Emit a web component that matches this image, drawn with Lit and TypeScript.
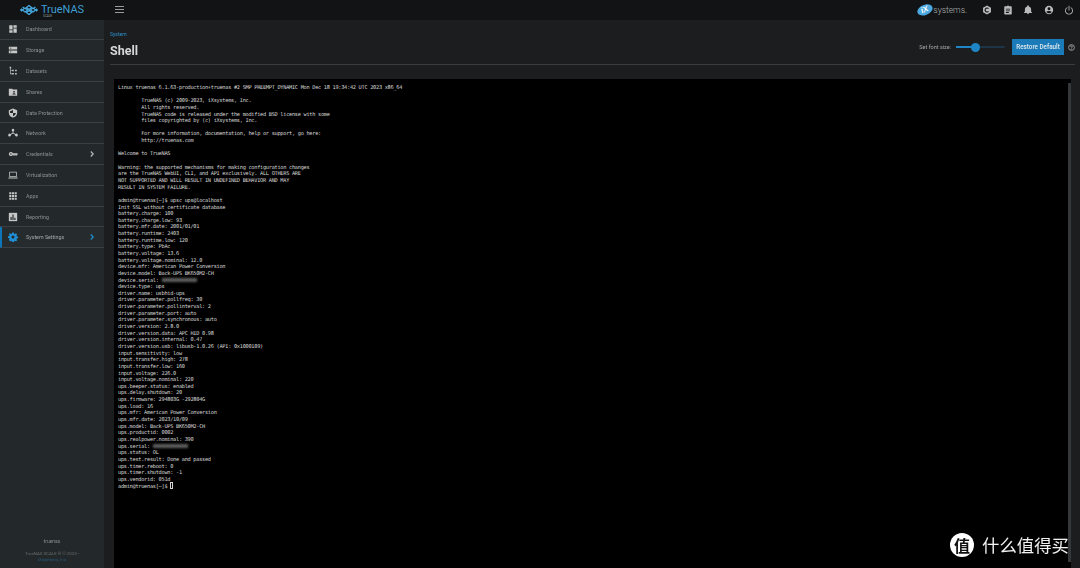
import { LitElement, html, css, svg } from "lit";
import { customElement } from "lit/decorators.js";

const LINES = `Linux truenas 6.1.63-production+truenas #2 SMP PREEMPT_DYNAMIC Mon Dec 18 19:34:42 UTC 2023 x86_64

        TrueNAS (c) 2009-2023, iXsystems, Inc.
        All rights reserved.
        TrueNAS code is released under the modified BSD license with some
        files copyrighted by (c) iXsystems, Inc.

        For more information, documentation, help or support, go here:
        http://truenas.com

Welcome to TrueNAS

Warning: the supported mechanisms for making configuration changes
are the TrueNAS WebUI, CLI, and API exclusively. ALL OTHERS ARE
NOT SUPPORTED AND WILL RESULT IN UNDEFINED BEHAVIOR AND MAY
RESULT IN SYSTEM FAILURE.

admin@truenas[~]$ upsc ups@localhost
Init SSL without certificate database
battery.charge: 100
battery.charge.low: 93
battery.mfr.date: 2001/01/01
battery.runtime: 2403
battery.runtime.low: 120
battery.type: PbAc
battery.voltage: 13.6
battery.voltage.nominal: 12.0
device.mfr: American Power Conversion
device.model: Back-UPS BK650M2-CH
device.serial: @@
device.type: ups
driver.name: usbhid-ups
driver.parameter.pollfreq: 30
driver.parameter.pollinterval: 2
driver.parameter.port: auto
driver.parameter.synchronous: auto
driver.version: 2.8.0
driver.version.data: APC HID 0.98
driver.version.internal: 0.47
driver.version.usb: libusb-1.0.26 (API: 0x1000109)
input.sensitivity: low
input.transfer.high: 278
input.transfer.low: 160
input.voltage: 226.0
input.voltage.nominal: 220
ups.beeper.status: enabled
ups.delay.shutdown: 20
ups.firmware: 294803G -292804G
ups.load: 16
ups.mfr: American Power Conversion
ups.mfr.date: 2023/10/09
ups.model: Back-UPS BK650M2-CH
ups.productid: 0002
ups.realpower.nominal: 390
ups.serial: @@
ups.status: OL
ups.test.result: Done and passed
ups.timer.reboot: 0
ups.timer.shutdown: -1
ups.vendorid: 051d
admin@truenas[~]$ #`.split("\n");

const NAV: { label: string; icon: any; arrow?: boolean; active?: boolean }[] = [
  { label: "Dashboard", icon: svg`<path d="M3 3h8v10H3zM13 3h8v6h-8zM13 11h8v10h-8zM3 15h8v6H3z"/>` },
  { label: "Storage", icon: svg`<path d="M2 4h20v7H2zM2 13h20v7H2z"/><path fill="#23282a" d="M5 6.500h3v2H5zM5 15.500h3v2H5z"/>` },
  { label: "Datasets", icon: svg`<path d="M4 2h3.500v4H4zM10 9h4v3.500h-4zM17 9h4v3.500h-4zM10 17h4v3.500h-4zM17 17h4v3.500h-4zM5 6h1.500v4H10v1.500H6.500V18H10v1.500H5z"/>` },
  { label: "Shares", icon: svg`<path d="M2 4h8l2 2h10v15H2z"/><circle cx="14.500" cy="11.500" r="2" fill="#23282a"/><path fill="#23282a" d="M10.500 18c0-2.400 2.400-3.200 4-3.200s4 .8 4 3.200z"/>` },
  { label: "Data Protection", icon: svg`<path d="M12 1l10 4.500V12c0 5.500-4.300 10-10 11C6.300 22 2 17.500 2 12V5.500z"/><path fill="#23282a" d="M12 4.500V12h7c-.5 3.700-3.300 6.800-7 7.800V12H5V7.500z"/>` },
  { label: "Network", icon: svg`<path d="M12 2a3.200 3.200 0 0 1 1 6.200v3.300l5 3.100a3.200 3.200 0 1 1-1 1.700l-5-3.100-5 3.100a3.200 3.200 0 1 1-1-1.700l5-3.100V8.200A3.200 3.200 0 0 1 12 2z"/>` },
  { label: "Credentials", arrow: true, icon: svg`<path d="M7 7a5 5 0 0 1 4.700 3.400H23v3.200h-2v2.800h-3v-2.800h-2v2.800h-3v-2.800h-1.300A5 5 0 1 1 7 7zm0 3.200a1.800 1.800 0 1 0 0 3.600 1.800 1.800 0 0 0 0-3.600z"/>` },
  { label: "Virtualization", icon: svg`<path d="M4 4h16a1 1 0 0 1 1 1v12H3V5a1 1 0 0 1 1-1zm.8 1.800v9.400h14.400V5.800zM1 18h22v2.500H1z"/>` },
  { label: "Apps", icon: svg`<path d="M3 3h5v5H3zM9.500 3h5v5h-5zM16 3h5v5h-5zM3 9.500h5v5H3zM9.500 9.500h5v5h-5zM16 9.500h5v5h-5zM3 16h5v5H3zM9.500 16h5v5h-5zM16 16h5v5h-5z"/>` },
  { label: "Reporting", icon: svg`<path d="M2 2h20v20H2z"/><path fill="#23282a" d="M6 12h2.800v7H6zM10.600 6h2.800v13h-2.800zM15.200 14h2.800v5h-2.800z"/>` },
  { label: "System Settings", arrow: true, active: true, icon: svg`<path d="M10 1h4l.6 3 1.900.8 2.500-1.700 2.900 2.900-1.700 2.500.8 1.900 3 .6v4l-3 .6-.8 1.900 1.700 2.500-2.900 2.900-2.500-1.700-1.900.8-.6 3h-4l-.6-3-1.900-.8-2.500 1.700L2.100 19.100l1.700-2.500-.8-1.900-3-.6v-4l3-.6.8-1.900L2.100 5 5 3.100l2.500 1.700 1.900-.8z"/><circle cx="12" cy="12" r="3.800" fill="#23282a"/>` },
];

@customElement("app-root")
export class AppRoot extends LitElement {
  static styles = css`
    :host { display: block; width: 1080px; height: 568px; overflow: hidden; background: #1b1d1e; font-family: Roboto, "Liberation Sans", sans-serif; position: relative; }
    .page { height: 568px; filter: blur(.3px); }
    .top { height: 19.500px; display: flex; align-items: center; background: #111314; }
    .brand { width: 104px; flex: none; display: flex; align-items: center; gap: 3px; padding-left: 20px; box-sizing: border-box; position: relative; }
    .brand .word { font-size: 10.900px; color: #3f9fd3; line-height: 14px; }
    .brand .scale { position: absolute; left: 43px; top: 11px; font-size: 3px; color: #9aa; }
    .burger { margin-left: 11px; width: 9px; height: 7px; border-top: 1px solid #9a9c9c; border-bottom: 1px solid #9a9c9c; position: relative; box-sizing: border-box; }
    .burger::after { content: ""; position: absolute; left: 0; right: 0; top: 2px; height: 1px; background: #9a9c9c; }
    .right { margin-left: auto; display: flex; align-items: center; padding-right: 6px; height: 19px; }
    .ix { display: flex; align-items: center; margin-right: 15px; }
    .ix-badge { width: 15.500px; height: 10px; border-radius: 50%; background: #4ba8e0; color: #fff; font: italic 700 8px/10px "Liberation Sans", sans-serif; text-align: center; transform: rotate(-22deg); }
    .ix-word { color: #b5b7b7; font-size: 8.500px; margin-left: 1px; font-weight: 300; }
    .tico { width: 10px; height: 10px; margin-left: 10.500px; fill: #b9bbbb; display: block; }
    .tico.first { margin-left: 0; }
    .body { display: flex; height: 548.500px; }
    .side { width: 104px; flex: none; background: #23282a; display: flex; flex-direction: column; }
    .nav { height: 20.800px; flex: none; display: flex; align-items: center; border-bottom: 1px solid #3c4042; box-sizing: border-box; position: relative; padding-left: 8px; color: #8d9091; font-size: 5.300px; }
    .nav svg.ico { width: 10px; height: 10px; fill: #c6c8c8; flex: none; margin-right: 8px; }
    .nav.active { background: #262b2e; color: #a5a8a8; border-left: 2px solid #0f75bb; padding-left: 6px; }
    .nav.active svg.ico { fill: #1f8fd6; }
    .arrow { position: absolute; left: 90px; top: 7px; width: 4px; height: 6px; fill: none; stroke: #b9bbbb; stroke-width: 1.200; }
    .nav.active .arrow { stroke: #1f8fd6; left: 88px; }
    .foot { margin-top: auto; padding-bottom: 4px; text-align: center; font-size: 4.400px; line-height: 6.600px; color: #6a6e6f; }
    .foot .host { font-size: 5px; color: #868a8b; margin-bottom: 6px; }
    .foot .co { color: #2a5c7d; }
    .main { flex: 1; min-width: 0; padding: 0 5px 0 6px; display: flex; flex-direction: column; }
    .head { height: 45px; flex: none; border-bottom: 1px solid #3a3c3d; display: flex; box-sizing: border-box; }
    .titles { padding-top: 11px; }
    .crumb { font-size: 5px; line-height: 6px; color: #2d93cf; }
    .title { font-size: 12.500px; line-height: 14px; font-weight: 700; color: #d6d7d7; margin-top: 7px; }
    .ctl { margin-left: auto; display: flex; align-items: center; height: 16px; margin-top: 19.500px; }
    .ctl .lab { font-size: 5.500px; color: #a6a8a8; margin-right: 5px; }
    .slider { width: 49px; height: 2px; background: #1d3544; border-radius: 1px; position: relative; }
    .slider i { position: absolute; left: 0; top: 0; height: 2px; width: 20px; background: #1f86c6; }
    .slider b { position: absolute; left: 15px; top: -3.500px; width: 9px; height: 9px; border-radius: 50%; background: #1f86c6; }
    .btn { width: 52px; height: 16px; margin-left: 7px; background: #1b7ab8; color: #dfe8ee; font-size: 6.300px; line-height: 16px; text-align: center; font-weight: 500; }
    .help { width: 7px; height: 7px; margin-left: 4px; fill: none; stroke: #a6a8a8; stroke-width: 1; }
    .term { margin: 14.700px 4px 0 3.500px; flex: 1; background: #000; padding: 4.800px 0 0 4.500px; color: #d6d6d6; position: relative; min-height: 0; box-sizing: border-box; }
    .bar { position: absolute; right: 0; top: 4px; bottom: 6px; width: 3.500px; background: #34383a; }
    .ln { font: 5.300px/6.650px "DejaVu Sans Mono", "Liberation Mono", monospace; letter-spacing: -.29px; white-space: pre; height: 6.650px; }
    .blur { display: inline-block; width: 35px; height: 4px; vertical-align: -0.500px; background: #5c5c5c; filter: blur(1.200px); }
    .cur { display: inline-block; width: 3px; height: 7px; border: .7px solid #d4d4d4; box-sizing: border-box; vertical-align: -1.500px; }
    .wm { position: absolute; right: 0; bottom: 11px; display: flex; align-items: center; gap: 8px; width: 130px; box-sizing: border-box; }
    .wm-ico { width: 24px; height: 24px; border-radius: 50%; background: #fff; color: #111; font: 700 16px/24px "Noto Sans CJK SC", sans-serif; text-align: center; flex: none; }
    .wm-txt { color: #f2f2f2; font: 400 17.400px/24px "Noto Sans CJK SC", sans-serif; white-space: nowrap; }
  `;

  private line(l: string) {
    if (l.endsWith("@@")) return html`<div class="ln">${l.slice(0, -2)}<span class="blur"></span></div>`;
    if (l.endsWith("#") && l.startsWith("admin")) return html`<div class="ln">${l.slice(0, -1)}<span class="cur"></span></div>`;
    return html`<div class="ln">${l || " "}</div>`;
  }

  render() {
    return html`
      <div class="page">
      <div class="top">
        <div class="brand">
          <svg width="18" height="10" viewBox="0 0 36 20" fill="none" stroke="#45a8dd" stroke-width="2.600">
            <path d="M18 1l5 4-5 4-5-4zM18 11l5 4-5 4-5-4zM10 6l5 4-5 4-5-4zM26 6l5 4-5 4-5-4zM5 4l3 2M31 4l-3 2M1 10l3-2.500M35 10l-3-2.500M1 10l3 2.500M35 10l-3 2.500"/>
          </svg>
          <span class="word">TrueNAS</span>
          <span class="scale">SCALE</span>
        </div>
        <div class="burger"></div>
        <div class="right">
          <div class="ix"><span class="ix-badge">iX</span><span class="ix-word">systems.</span></div>
          <svg class="tico first" viewBox="0 0 24 24"><path d="M12 1l9.500 5.500v11L12 23l-9.500-5.500v-11zm0 5a6 6 0 1 0 4.500 10l-2-1.800a3.300 3.300 0 1 1 0-4.400l2-1.800A6 6 0 0 0 12 6z"/></svg>
          <svg class="tico" viewBox="0 0 24 24"><path d="M5 3h4.200a3 3 0 0 1 5.600 0H19a2 2 0 0 1 2 2v16a2 2 0 0 1-2 2H5a2 2 0 0 1-2-2V5a2 2 0 0 1 2-2zm2 6v2h10V9zm0 4v2h10v-2zm0 4v2h7v-2z"/></svg>
          <svg class="tico" viewBox="0 0 24 24"><path d="M12 22a2.500 2.500 0 0 0 2.500-2.500h-5A2.500 2.500 0 0 0 12 22zm7.500-6v-5.500c0-3.400-2-6.200-5.500-7V2.500a2 2 0 0 0-4 0v1c-3.500.8-5.500 3.600-5.500 7V16l-2 2v1h19v-1z"/></svg>
          <svg class="tico" viewBox="0 0 24 24"><path d="M12 2a10 10 0 1 1 0 20 10 10 0 0 1 0-20zm0 3.500a3.500 3.500 0 1 0 0 7 3.500 3.500 0 0 0 0-7zM12 20c2.700 0 5-1.300 6.400-3.300-1-1.500-4.200-2.300-6.400-2.300s-5.400.8-6.400 2.300C7 18.700 9.300 20 12 20z"/></svg>
          <svg class="tico" viewBox="0 0 24 24"><path d="M11 2h2v11h-2zM7.500 5.200l1.400 1.500a7.500 7.500 0 1 0 6.200 0l1.400-1.500a9.500 9.500 0 1 1-9 0z"/></svg>
        </div>
      </div>
      <div class="body">
        <div class="side">
          ${NAV.map(n => html`
            <div class="nav ${n.active ? "active" : ""}">
              <svg class="ico" viewBox="0 0 24 24">${n.icon}</svg>
              <span>${n.label}</span>
              ${n.arrow ? html`<svg class="arrow" viewBox="0 0 4 6"><path d="M.8.5 3.200 3 .8 5.500"/></svg>` : ""}
            </div>`)}
          <div class="foot">
            <div class="host">truenas</div>
            <div>TrueNAS SCALE ® © 2023 -</div>
            <div class="co">iXsystems, Inc</div>
          </div>
        </div>
        <div class="main">
          <div class="head">
            <div class="titles">
              <div class="crumb">System</div>
              <div class="title">Shell</div>
            </div>
            <div class="ctl">
              <span class="lab">Set font size:</span>
              <div class="slider"><i></i><b></b></div>
              <div class="btn">Restore Default</div>
              <svg class="help" viewBox="0 0 8 8"><circle cx="4" cy="4" r="3.300"/><path d="M3 3.200a1 1 0 1 1 1.500.9c-.4.200-.5.500-.5.900M4 5.600v.7"/></svg>
            </div>
          </div>
          <div class="term">${LINES.map(l => this.line(l))}<div class="bar"></div></div>
        </div>
      </div>
      </div>
      <div class="wm"><span class="wm-ico">值</span><span class="wm-txt">什么值得买</span></div>
    `;
  }
}
